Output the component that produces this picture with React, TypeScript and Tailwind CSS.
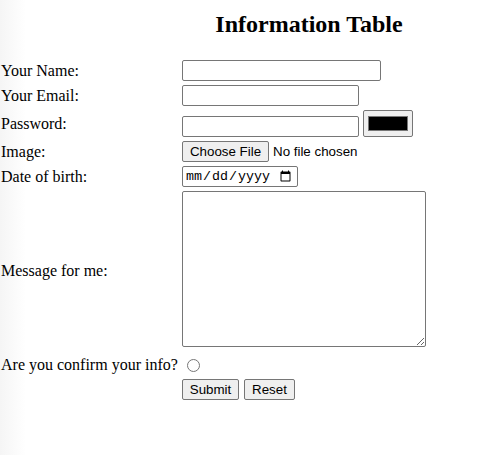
import React from 'react';

const label = "pl-[1px] flex items-center font-['Liberation_Serif',serif] text-[16px] text-black";
const field = "h-[21px] border border-[#767676] rounded-[2px] bg-white px-[2px] font-['Liberation_Sans',sans-serif] text-[13.333px]";
const btn =
  "h-[21px] border border-[#767676] rounded-[2px] bg-[#efefef] text-center font-['Liberation_Sans',sans-serif] text-[13.333px] leading-[19px] text-black";

export default function App() {
  return (
    <div className="w-[496px] h-[455px] bg-[linear-gradient(to_right,#f5f5f5,#ffffff_26px)] overflow-hidden">
      {/* Title */}
      <div className="pt-[10px] pl-[182px]">
        <h2 className="w-[254px] h-[28px] leading-[28px] text-center font-['Liberation_Serif',serif] text-[24px] font-bold text-black">
          Information Table
        </h2>
      </div>

      <form
        className="mt-[21px] grid grid-cols-[182px_1fr] grid-rows-[23px_23px_29px_23px_23px_162px_22px_23px] gap-y-[2px]"
        onSubmit={(e) => e.preventDefault()}
      >
        <label className={label}>Your Name:</label>
        <div className="flex items-center">
          <input type="text" className={`${field} w-[199px]`} />
        </div>

        <label className={label}>Your Email:</label>
        <div className="flex items-center">
          <input type="email" className={`${field} w-[177px]`} />
        </div>

        <label className={label}>Password:</label>
        <div className="flex items-end pb-[1px] gap-[4px]">
          <input type="password" className={`${field} w-[177px]`} />
          <span className="w-[50px] h-[27px] border border-[#767676] rounded-[2px] bg-[#efefef] pl-[4px] pt-[5px]">
            <span className="block w-[40px] h-[15px] border border-[#777777] bg-black" />
          </span>
        </div>

        <label className={label}>Image:</label>
        <div className="flex items-center gap-[4px]">
          <button type="button" className={`${btn} w-[87px]`}>
            Choose File
          </button>
          <span className="font-['Liberation_Sans',sans-serif] text-[13.333px] text-black">No file chosen</span>
        </div>

        <label className={label}>Date of birth:</label>
        <div className="flex items-center">
          <input
            type="date"
            className="w-[116px] h-[21px] border border-[#767676] rounded-[2px] bg-white pl-[2px] pr-[3px] font-['Liberation_Mono',monospace] text-[13.333px] text-black"
          />
        </div>

        <label className={label}>Message for me:</label>
        <div className="flex items-start pt-[1px]">
          <textarea className="w-[244px] h-[156px] border border-[#767676] rounded-[2px] bg-white p-[2px] font-['Liberation_Mono',monospace] text-[13.333px]" />
        </div>

        <label className={label}>Are you confirm your info?</label>
        <div className="flex items-center">
          <input type="radio" className="ml-[5px] w-[13px] h-[13px] m-0" />
        </div>

        <div />
        <div className="flex items-center gap-[5px]">
          <button type="submit" className={`${btn} w-[57px]`}>
            Submit
          </button>
          <button type="reset" className={`${btn} w-[51px]`}>
            Reset
          </button>
        </div>
      </form>
    </div>
  );
}
